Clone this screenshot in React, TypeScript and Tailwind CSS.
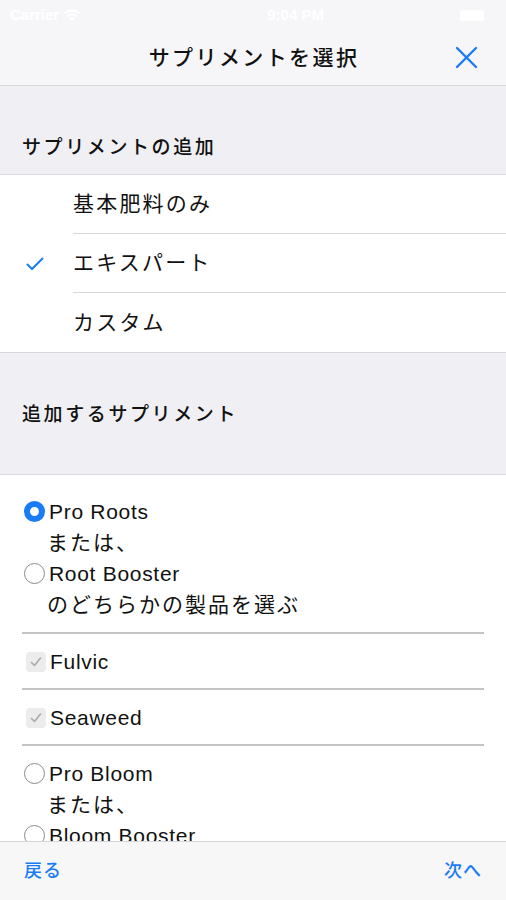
import React from 'react'

const font = { fontFamily: '"Liberation Sans", "Noto Sans CJK JP", sans-serif' }

function Radio({ checked }: { checked?: boolean }) {
  if (checked) {
    return (
      <span className="w-[21px] h-[21px] rounded-full bg-[#1a7cf5] flex items-center justify-center shrink-0">
        <span className="w-[9px] h-[9px] rounded-full bg-white" />
      </span>
    )
  }
  return <span className="w-[21px] h-[21px] rounded-full border-[1.5px] border-[#8a8a8a] bg-white shrink-0" />
}

function Check() {
  return (
    <span className="w-[20px] h-[20px] rounded-[4px] bg-[#ececec] flex items-center justify-center shrink-0">
      <svg width="14" height="14" viewBox="0 0 14 14" fill="none">
        <path d="M2.5 7.5 L5.5 10.5 L11.5 3" stroke="#a9a9a9" strokeWidth="1.6" strokeLinecap="round" strokeLinejoin="round" />
      </svg>
    </span>
  )
}

function Divider() {
  return <div className="mx-[22px] h-[2px] bg-[#c4c4c4]" />
}

export default function App() {
  const options = ['基本肥料のみ', 'エキスパート', 'カスタム']
  return (
    <div className="w-[506px] h-[900px] flex flex-col overflow-hidden bg-white text-[#111]" style={font}>
      {/* status bar */}
      <div className="h-[30px] bg-[#f6f6f8] flex items-center justify-between px-[10px] text-white text-[15px] font-semibold shrink-0">
        <div className="flex items-center gap-1">
          <span>Carrier</span>
          <svg width="18" height="13" viewBox="0 0 18 13" fill="white">
            <path d="M9 12 L6.5 9.3 A3.6 3.6 0 0 1 11.5 9.3 Z" />
            <path d="M3.8 6.6 A7.5 7.5 0 0 1 14.2 6.6 L12.8 8 A5.5 5.5 0 0 0 5.2 8 Z" />
            <path d="M1 3.8 A11.5 11.5 0 0 1 17 3.8 L15.6 5.2 A9.5 9.5 0 0 0 2.4 5.2 Z" />
          </svg>
        </div>
        <span className="ml-[50px]">9:04 PM</span>
        <span className="w-[24px] h-[11px] rounded-[3px] bg-white mr-[12px]" />
      </div>

      {/* nav bar */}
      <div className="h-[56px] bg-[#f6f6f8] border-b border-[#d8d8dc] relative flex items-center justify-center shrink-0">
        <span className="text-[21px] font-medium tracking-[2.4px] pl-[2px]">サプリメントを選択</span>
        <svg className="absolute left-[455px] top-[16px]" width="23" height="23" viewBox="0 0 23 23">
          <path d="M2 2 L21 21 M21 2 L2 21" stroke="#1a7cf5" strokeWidth="2.4" strokeLinecap="round" />
        </svg>
      </div>

      <div className="flex-1 overflow-hidden">
        {/* section 1 header */}
        <div className="h-[89px] bg-[#efeff4] flex items-end pb-[12px] px-[22px] border-b border-[#dcdce0]">
          <span className="text-[19px] font-medium tracking-[2.6px]">サプリメントの追加</span>
        </div>

        {/* options */}
        <div className="bg-white border-b border-[#d8d8dc]">
          {options.map((o, i) => (
            <div key={o} className="h-[59px] flex">
              <div className="w-[73px] flex items-center justify-center">
                {i === 1 && (
                  <svg width="18" height="14" viewBox="0 0 18 14" fill="none" className="mr-[4px]">
                    <path d="M1.5 7.5 L6 12 L16.5 1.5" stroke="#1a7cf5" strokeWidth="2" strokeLinecap="round" strokeLinejoin="round" />
                  </svg>
                )}
              </div>
              <div className={`flex-1 flex items-center text-[21px] tracking-[2.2px] ${i < 2 ? 'border-b border-[#d8d8dc]' : ''}`}>
                {o}
              </div>
            </div>
          ))}
        </div>

        {/* section 2 header */}
        <div className="h-[122px] bg-[#efeff4] flex items-center pt-[3px] px-[22px] border-b border-[#dcdce0]">
          <span className="text-[19px] font-medium tracking-[2.6px]">追加するサプリメント</span>
        </div>

        {/* supplements */}
        <div className="bg-white text-[21px] leading-[31px] pt-[21px]">
          <div className="pl-[24px] pb-[12px]">
            <div className="flex items-center gap-[4px]"><Radio checked /><span className="tracking-[0.7px]">Pro Roots</span></div>
            <div className="pl-[23px] tracking-[2px]">または、</div>
            <div className="flex items-center gap-[4px]"><Radio /><span className="tracking-[0.7px]">Root Booster</span></div>
            <div className="pl-[23px] tracking-[2px]">のどちらかの製品を選ぶ</div>
          </div>
          <Divider />
          <div className="pl-[26px] pt-[12px] pb-[11px] flex items-center gap-[4px]"><Check /><span className="tracking-[0.7px]">Fulvic</span></div>
          <Divider />
          <div className="pl-[26px] pt-[12px] pb-[11px] flex items-center gap-[4px]"><Check /><span className="tracking-[0.7px]">Seaweed</span></div>
          <Divider />
          <div className="pl-[24px] pt-[12px]">
            <div className="flex items-center gap-[4px]"><Radio /><span className="tracking-[0.7px]">Pro Bloom</span></div>
            <div className="pl-[23px] tracking-[2px]">または、</div>
            <div className="flex items-center gap-[4px]"><Radio /><span className="tracking-[0.7px]">Bloom Booster</span></div>
          </div>
        </div>
      </div>

      {/* toolbar */}
      <div className="h-[59px] bg-[#f7f7f8] border-t border-[#d6d6da] flex items-center justify-between px-[24px] text-[#1a7cf5] text-[18px] font-medium tracking-[1px] shrink-0">
        <span>戻る</span>
        <span>次へ</span>
      </div>
    </div>
  )
}
